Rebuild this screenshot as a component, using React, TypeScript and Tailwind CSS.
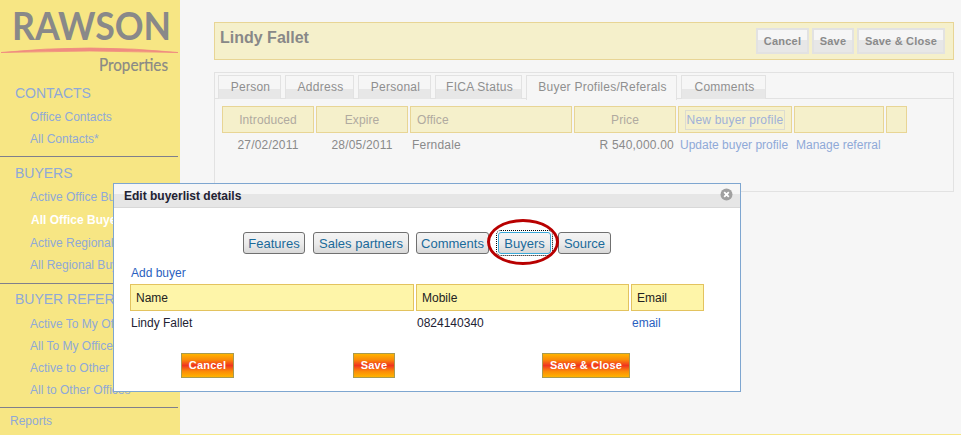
import React from 'react';

const FONT = "font-['Liberation_Sans',Arial,sans-serif]";

const sections = [
  { title: 'CONTACTS', row: 'h-[22px]', items: ['Office Contacts', 'All Contacts*'] },
  { title: 'BUYERS', row: 'h-[22.7px]', items: ['Active Office Buyers', 'All Office Buyers', 'Active Regional Buyers', 'All Regional Buyers'] },
  { title: 'BUYER REFERRALS', row: 'h-[22px]', items: ['Active To My Office', 'All To My Office', 'Active to Other Offices', 'All to Other Offices'] },
];

const tabs = [
  { label: 'Person', w: 'w-[63px]' },
  { label: 'Address', w: 'w-[69px]' },
  { label: 'Personal', w: 'w-[73px]' },
  { label: 'FICA Status', w: 'w-[87px]' },
  { label: 'Buyer Profiles/Referals', w: 'w-[151px]', active: true },
  { label: 'Comments', w: 'w-[85px]' },
];

const Logo = () => (
  <div className="h-[82px] w-full">
    <svg width="180" height="82" viewBox="0 0 180 82">
      <text x="12" y="40" textLength="159" lengthAdjust="spacingAndGlyphs" fontFamily="Lato, sans-serif" fontWeight="700" fontSize="38" fill="#898989">
        RAWSON
      </text>
      <path d="M1 52.5 Q90 43.5 178 52.5 Q90 49.5 1 52.5 Z" fill="#f08c80" stroke="#f08c80" strokeWidth="0.8" />
      <text x="99" y="71" textLength="69" lengthAdjust="spacingAndGlyphs" fontFamily="Lato, sans-serif" fontSize="18" stroke="#8a8a86" strokeWidth="0.2" fill="#8a8a86">
        Properties
      </text>
    </svg>
  </div>
);

const GreyBtn = ({ label, w }: { label: string; w: string }) => (
  <button className={`${w} h-[26px] border-2 border-[#e2e2e2] text-[11px] font-bold text-[#8a8a8a] tracking-[0.2px] bg-[linear-gradient(#f6f6f6_45%,#e7e7e7_45%)]`}>
    {label}
  </button>
);

const HeadCell = ({ w, children, center }: { w: string; children?: React.ReactNode; center?: boolean }) => (
  <div className={`${w} h-[27px] flex items-center border border-[#e8d595] bg-[#f5f0cb] text-[#b0aaa0] tracking-[0.1px] ${center ? 'justify-center' : 'pl-[6px]'}`}>
    {children}
  </div>
);

const DialogTab = ({ label, w }: { label: string; w: string }) => (
  <button className={`${w} h-[22px] rounded-[3px] border border-[#707070] text-[13px] leading-none text-[#1a6a9a] bg-[linear-gradient(#f4f4f4,#ececec_50%,#d8d8d8)]`}>
    {label}
  </button>
);

const OrangeBtn = ({ label, w }: { label: string; w: string }) => (
  <button className={`${w} h-[25px] border border-[#a89a50] text-[11px] font-bold tracking-[0.2px] text-white bg-[linear-gradient(#ffb400,#fb8a08_25%,#f03420_50%,#fb8a08_75%,#ffb400)]`}>
    {label}
  </button>
);

export default function App() {
  return (
    <div className={`relative flex h-[435px] w-[961px] overflow-hidden bg-[#f6f6f6] ${FONT}`}>
      <aside className="w-[180px] shrink-0 bg-[#f7e684] text-[12px] text-[#8fa9d8]">
        <Logo />
        {sections.map((s) => (
          <div key={s.title} className="mr-[2px] border-b-[1.5px] border-[#7f7f8c] pb-[6px]">
            <div className={`flex h-[22px] items-center pl-[15px] text-[14px] ${s.title === 'CONTACTS' ? '' : 'mt-[5px]'}`}>{s.title}</div>
            <div className="mt-[2px]">
              {s.items.map((item) => (
                <div
                  key={item}
                  className={`flex items-center whitespace-nowrap ${s.row} ${item === 'All Office Buyers' ? 'pl-[31px] font-bold text-white' : 'pl-[30px]'}`}
                >
                  {item}
                </div>
              ))}
            </div>
          </div>
        ))}
        <div className="flex h-[26px] items-center pl-[10px]">Reports</div>
      </aside>

      <main className="flex-1 border-b border-[#f7e684] pl-[34px] pr-[7px] pt-[22px] text-[12px] text-[#8a8a8a]">
        <div className="flex h-[38px] items-start justify-between border border-[#e8d595] bg-[#f5f0cb] pl-[5px] pr-[8px]">
          <div className="mt-[3px] text-[16px] font-bold text-[#888888]">Lindy Fallet</div>
          <div className="mt-[5px] flex gap-[3px]">
            <GreyBtn label="Cancel" w="w-[53px]" />
            <GreyBtn label="Save" w="w-[42px]" />
            <GreyBtn label="Save & Close" w="w-[88px]" />
          </div>
        </div>

        <div className="mt-[12px] h-[120px] border border-[#e2e2e2]">
          <div className="flex h-[26px] gap-[4px] border-b border-[#e2e2e2] pl-[3px] pt-[2px]">
            {tabs.map((t) => (
              <div
                key={t.label}
                className={`${t.w} flex items-center justify-center border border-b-0 border-[#e2e2e2] pb-[2px] pl-[2px] tracking-[0.25px] text-[#8f8f8f] ${
                  t.active ? 'relative z-10 h-[25px] bg-[#f6f6f6]' : 'h-[24px] bg-[linear-gradient(#f6f6f6_55%,#e7e7e7_55%)]'
                }`}
              >
                {t.label}
              </div>
            ))}
          </div>
          <div className="mt-[7px] flex gap-[2px] pl-[7px]">
            <HeadCell w="w-[92px]" center>Introduced</HeadCell>
            <HeadCell w="w-[92px]" center>Expire</HeadCell>
            <HeadCell w="w-[162px]">Office</HeadCell>
            <HeadCell w="w-[102px]" center>Price</HeadCell>
            <HeadCell w="w-[114px]" center>
              <span className="border border-[#dcdcd0] px-px text-[#9fb0d8] tracking-[0.2px]">New buyer profile</span>
            </HeadCell>
            <HeadCell w="w-[90px]" />
            <HeadCell w="w-[21px]" />
          </div>
          <div className="mt-[4px] flex h-[16px] items-center gap-[2px] pl-[7px]">
            <div className="w-[92px] text-center tracking-[0.2px]">27/02/2011</div>
            <div className="w-[92px] text-center tracking-[0.2px]">28/05/2011</div>
            <div className="w-[162px] pl-[2px] tracking-[0.2px]">Ferndale</div>
            <div className="w-[102px] pr-[2px] text-right tracking-[0.2px]">R 540,000.00</div>
            <div className="w-[114px] whitespace-nowrap pl-[2px] text-[#8fa9d8]">Update buyer profile</div>
            <div className="w-[90px] whitespace-nowrap pl-[2px] text-[#8fa9d8]">Manage referral</div>
          </div>
        </div>
      </main>

      {/* dialog over the page */}
      <div className="absolute left-[113px] top-[183px] h-[209px] w-[628px] border border-[#7ea6d0] bg-white text-[12px] text-[#222233]">
        <div className="relative flex h-[24px] items-center border-b border-[#d8d8d8] bg-[linear-gradient(#f6f6f6_45%,#e6e6e6_45%)] pl-[10px] text-[12px] font-bold">
          Edit buyerlist details
          <svg className="absolute right-[7px] top-[4px]" width="13" height="13" viewBox="0 0 13 13">
            <circle cx="6.5" cy="6.5" r="6" fill="#a0a0a0" />
            <path d="M4.2 4.2 L8.8 8.8 M8.8 4.2 L4.2 8.8" stroke="#ffffff" strokeWidth="1.8" />
          </svg>
        </div>

        <div className="relative ml-[129px] mt-[24px] flex items-center">
          <DialogTab label="Features" w="w-[62px]" />
          <div className="w-[8px]" />
          <DialogTab label="Sales partners" w="w-[96px]" />
          <div className="w-[7px]" />
          <DialogTab label="Comments" w="w-[73px]" />
          <div className="w-[9px]" />
          <button className="h-[22px] w-[53px] rounded-[3px] border-[1.5px] border-[#3aa8d8] text-[13px] leading-none text-[#1a6a9a] outline-1 outline-dotted outline-offset-[1px] outline-black bg-[linear-gradient(#f4f4f4,#ececec_50%,#d8d8d8)]">
            Buyers
          </button>
          <div className="w-[7px]" />
          <DialogTab label="Source" w="w-[53px]" />
          <div className="absolute left-[244px] top-[-13px] h-[46px] w-[72px] rounded-[50%] border-[3px] border-[#b80000]" />
        </div>

        <div className="ml-[17px] mt-[12px] h-[15px] leading-[15px] text-[#2a5fc0]">Add buyer</div>

        <div className="ml-[16px] mt-[3px] flex gap-[2px] text-[#222222]">
          <div className="flex h-[27px] w-[284px] items-center border border-[#e3c35f] bg-[#fef5a9] pl-[5px] pt-px">Name</div>
          <div className="flex h-[27px] w-[213px] items-center border border-[#e3c35f] bg-[#fef5a9] pl-[5px] pt-px">Mobile</div>
          <div className="flex h-[27px] w-[73px] items-center border border-[#e3c35f] bg-[#fef5a9] pl-[5px] pt-px">Email</div>
        </div>
        <div className="ml-[17px] mt-[4px] flex h-[15px] items-center">
          <div className="w-[286px]">Lindy Fallet</div>
          <div className="w-[215px]">0824140340</div>
          <div className="text-[#2a5fc0]">email</div>
        </div>

        <div className="ml-[67px] mt-[23px] flex">
          <OrangeBtn label="Cancel" w="w-[53px]" />
          <div className="w-[119px]" />
          <OrangeBtn label="Save" w="w-[42px]" />
          <div className="w-[147px]" />
          <OrangeBtn label="Save & Close" w="w-[88px]" />
        </div>
      </div>
    </div>
  );
}
